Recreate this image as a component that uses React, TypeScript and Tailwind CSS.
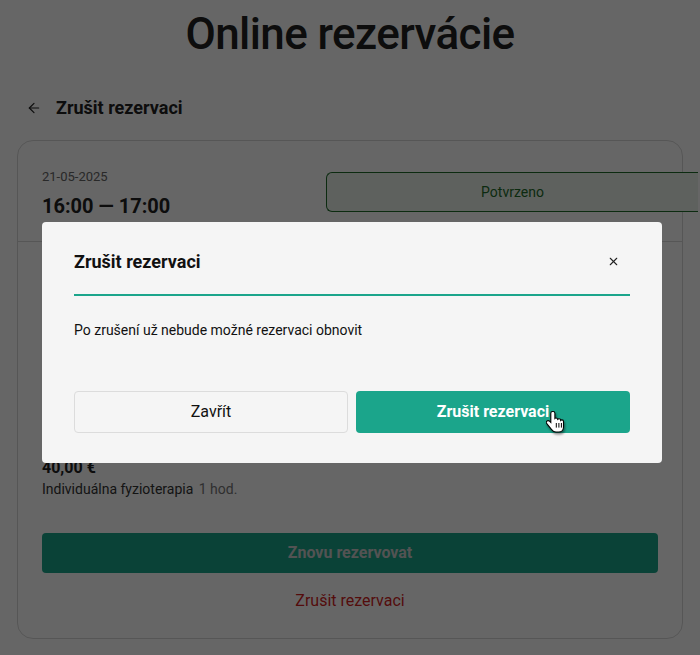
import { ArrowLeft, X } from "lucide-react";

const HandCursor = () => (
  <svg width="20" height="24" viewBox="0 0 20 24" className="drop-shadow-[1px_2px_1px_rgba(0,0,0,0.45)]">
    <path
      d="M6.5 1.5c-1 0-1.7.8-1.7 1.8v9.2l-1.3-1.3c-.8-.8-2-.8-2.7 0-.7.7-.6 1.8 0 2.5l4.6 5.6c1.2 1.5 2.5 2.7 4.6 2.7h2.6c2.9 0 4.9-2.2 4.9-5.1v-5.3c0-1-.7-1.7-1.6-1.7-.5 0-.9.2-1.2.5 0-1-.8-1.7-1.7-1.7-.5 0-1 .2-1.3.6-.2-.8-.9-1.3-1.7-1.3-.4 0-.8.1-1.1.4V3.3c0-1-.8-1.8-1.8-1.8z"
      fill="#fff"
      stroke="#000"
      strokeWidth="1.1"
    />
    <path d="M10.3 13v4.6M12.9 13v4.6M15.4 13v4.6" stroke="#000" strokeWidth="1" />
  </svg>
);

export default function App() {
  return (
    <div className="relative w-[700px] h-[655px] overflow-hidden bg-white font-['Roboto',sans-serif] text-[#222]">
      <h1 className="text-center text-[44px] font-medium leading-none pt-[12px] tracking-[-0.6px]">
        Online rezervácie
      </h1>

      <div className="flex items-center gap-[14px] pl-[26px] mt-[38px]">
        <ArrowLeft size={16} strokeWidth={1.8} />
        <span className="text-[18px] font-bold">Zrušit rezervaci</span>
      </div>

      <div className="mx-[17px] mt-[19px] h-[499px] rounded-[16px] border border-[#d8d8d8]">
        <div className="flex pl-[24px] pt-[26px] h-[101px] border-b border-[#d8d8d8]">
          <div className="w-[284px] shrink-0">
            <div className="text-[13px] text-[#666]">21-05-2025</div>
            <div className="text-[20px] font-bold mt-[4px]">16:00 — 17:00</div>
          </div>
          <div className="mt-[5px] w-[372px] h-[40px] shrink-0 rounded-l-[6px] border border-r-0 border-[#1e6b2a] bg-[#eaf3ea] flex items-center justify-center text-[14px] text-[#1e6b2a]">
            Potvrzeno
          </div>
        </div>

        <div className="px-[24px] pt-[218px]">
          <div className="text-[16px] font-bold leading-none">40,00 €</div>
          <div className="text-[14px] mt-[3px] text-[#333]">
            Individuálna fyzioterapia <span className="text-[#777] ml-[2px]">1 hod.</span>
          </div>
          <button className="mt-[33px] w-full h-[40px] rounded-[4px] bg-[#1ba58b] text-[16px] font-bold text-[#cfcfcf]">
            Znovu rezervovat
          </button>
          <div className="mt-[16px] text-center text-[16px] text-[#d21f1f]">Zrušit rezervaci</div>
        </div>
      </div>

      <div className="absolute inset-0 bg-black/60" />

      <div className="absolute left-[42px] top-[222px] w-[620px] h-[241px] rounded-[4px] bg-[#f5f5f5] px-[32px] pt-[26px]">
        <div className="flex items-center justify-between pb-[19px] border-b-2 border-[#1ba58b]">
          <span className="text-[18px] font-bold text-[#111]">Zrušit rezervaci</span>
          <X size={13} strokeWidth={2} className="mr-[10px] text-[#222]" />
        </div>
        <p className="mt-[24px] text-[14px] text-[#111]">Po zrušení už nebude možné rezervaci obnovit</p>
        <div className="grid grid-cols-2 gap-[8px] mt-[50px]">
          <button className="h-[42px] rounded-[4px] border border-[#dcdcdc] bg-[#f5f5f5] text-[16px] text-[#111]">
            Zavřít
          </button>
          <button className="h-[42px] rounded-[4px] bg-[#1ba58b] text-[16px] font-bold text-white">
            Zrušit rezervaci
          </button>
        </div>
      </div>

      <div className="absolute left-[546px] top-[410px]">
        <HandCursor />
      </div>
    </div>
  );
}
